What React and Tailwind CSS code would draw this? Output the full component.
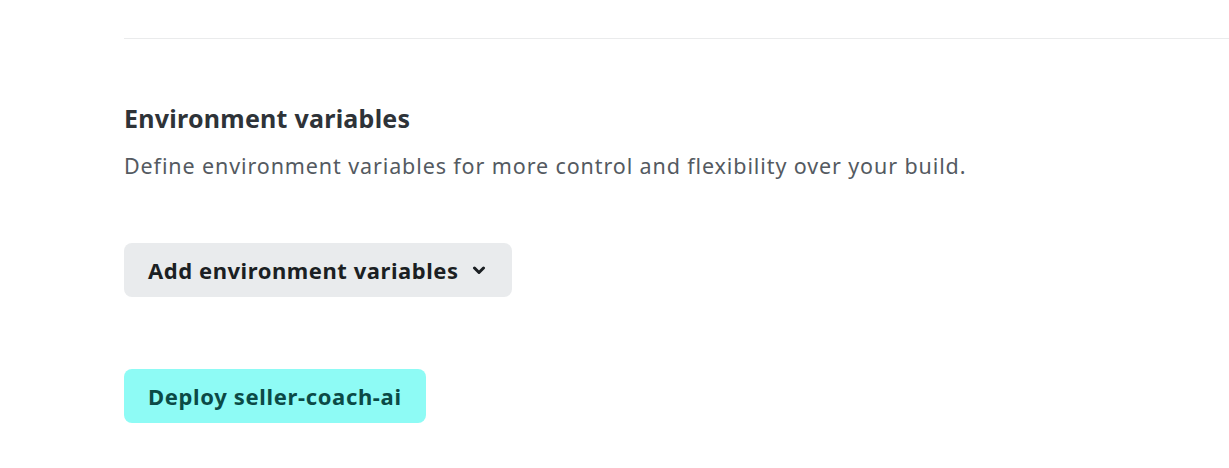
import React from 'react';

const ChevronDown = () => (
  <svg viewBox="0 0 14 9" className="w-[14px] h-[9px] ml-[13px]" fill="none">
    <path d="M2.5 2l4.5 4.5 4.5-4.5" stroke="currentColor" strokeWidth="3" strokeLinecap="round" strokeLinejoin="round" />
  </svg>
);

const App = () => {
  return (
    <div className="min-h-screen bg-white pl-[124px] pt-[38px]" style={{ fontFamily: '"Noto Sans", "Open Sans", sans-serif' }}>
      <section className="border-t border-[#eaebec] pt-[63px]">
        <h2 className="text-[25px] leading-[32px] font-bold tracking-[0.25px] text-[#2e3338]">Environment variables</h2>
        <p className="mt-[18px] text-[21.5px] leading-[28px] tracking-[0.89px] text-[#545a61]">
          Define environment variables for more control and flexibility over your build.
        </p>

        <button className="mt-[63px] h-[54px] pl-6 pr-[26px] rounded-lg bg-[#e9ebed] text-[#1b1f23] text-[22px] font-bold tracking-[0.55px] flex items-center">
          Add environment variables
          <ChevronDown />
        </button>

        <button className="mt-[72px] h-[54px] px-6 rounded-lg bg-[#8efbf5] text-[#0b4a46] text-[22px] font-bold tracking-[0.65px] flex items-center">
          Deploy seller-coach-ai
        </button>
      </section>
    </div>
  );
};

export default App;
